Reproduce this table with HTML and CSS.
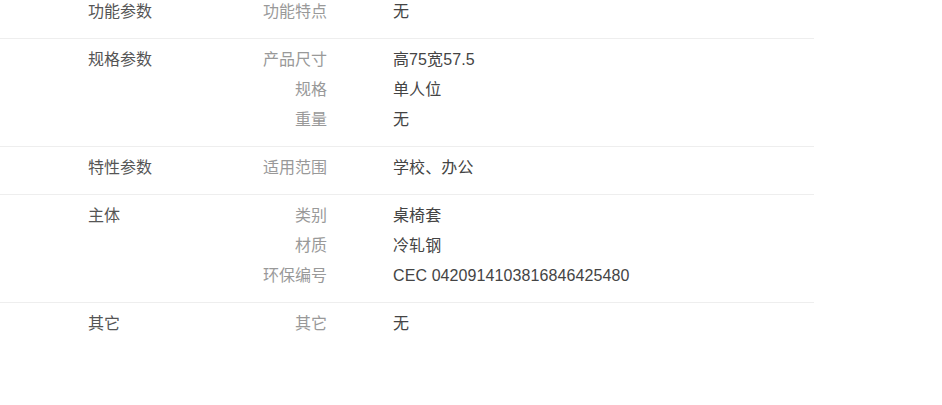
FILE: index.html
```html
<!DOCTYPE html>
<html lang="zh-CN">
<head>
    <meta charset="UTF-8">
    <meta name="viewport" content="width=device-width, initial-scale=1.0">
    <title>规格与包装</title>
    <link rel="stylesheet" href="styles.css">
</head>
<body>
    <div class="spec-list">
        <div class="spec-group">
            <div class="group-name">功能参数</div>
            <div class="group-items">
                <div class="item"><span class="key">功能特点</span><span class="value">无</span></div>
            </div>
        </div>
        <div class="spec-group">
            <div class="group-name">规格参数</div>
            <div class="group-items">
                <div class="item"><span class="key">产品尺寸</span><span class="value">高75宽57.5</span></div>
                <div class="item"><span class="key">规格</span><span class="value">单人位</span></div>
                <div class="item"><span class="key">重量</span><span class="value">无</span></div>
            </div>
        </div>
        <div class="spec-group">
            <div class="group-name">特性参数</div>
            <div class="group-items">
                <div class="item"><span class="key">适用范围</span><span class="value">学校、办公</span></div>
            </div>
        </div>
        <div class="spec-group">
            <div class="group-name">主体</div>
            <div class="group-items">
                <div class="item"><span class="key">类别</span><span class="value">桌椅套</span></div>
                <div class="item"><span class="key">材质</span><span class="value">冷轧钢</span></div>
                <div class="item"><span class="key">环保编号</span><span class="value">CEC 0420914103816846425480</span></div>
            </div>
        </div>
        <div class="spec-group">
            <div class="group-name">其它</div>
            <div class="group-items">
                <div class="item"><span class="key">其它</span><span class="value">无</span></div>
            </div>
        </div>
    </div>
</body>
</html>
```

FILE: styles.css
```css
body {
    margin: 0;
    padding: 0;
    background: #fff;
    font-family: "Liberation Sans", "Noto Sans CJK SC", sans-serif;
    font-size: 16px;
    color: #444;
}
.spec-list {
    width: 814px;
    margin-top: -9px;
}
.spec-group {
    display: flex;
    padding: 10px 0 15px;
    border-bottom: 1px solid #eee;
}
.spec-group:last-child {
    border-bottom: none;
}
.group-name {
    width: 110px;
    padding-left: 88px;
    line-height: 22px;
    color: #555;
}
.group-items {
    display: flex;
    flex-direction: column;
    gap: 8px;
}
.item {
    display: flex;
    line-height: 22px;
}
.key {
    width: 129px;
    text-align: right;
    color: #999;
}
.value {
    margin-left: 66px;
    color: #444;
    letter-spacing: 0.1px;
}
```
